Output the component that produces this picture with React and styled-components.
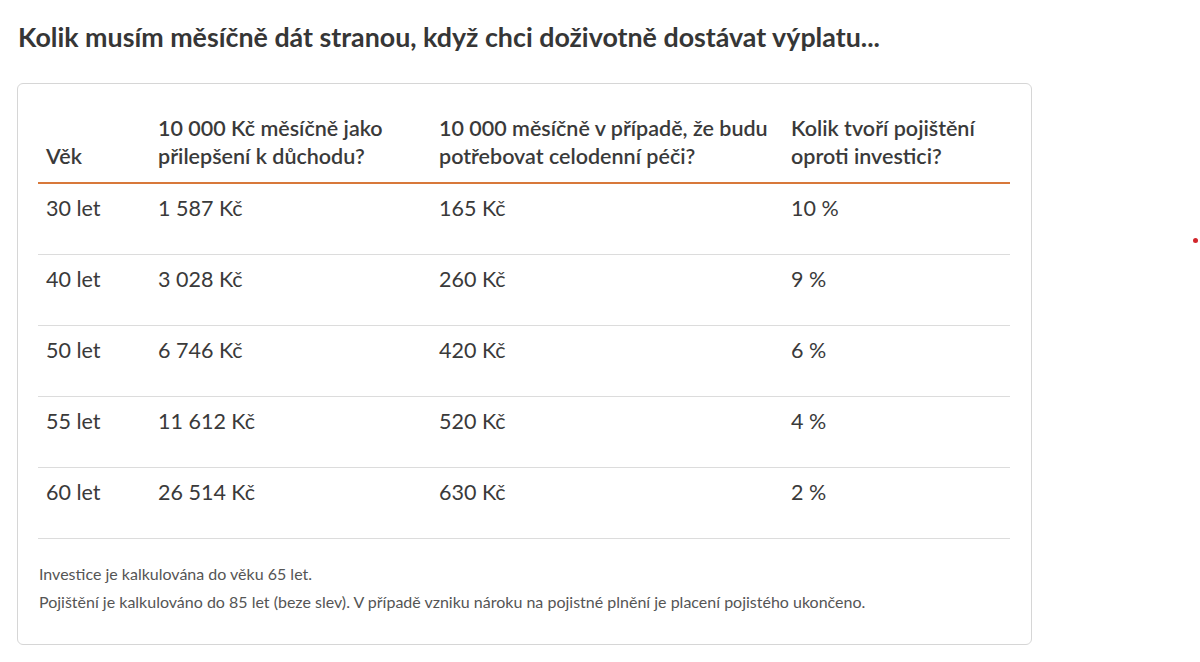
import React from "react";
import styled, { createGlobalStyle } from "styled-components";

const Global = createGlobalStyle`
  html, body { margin: 0; padding: 0; background: #fff; }
  body { font-family: "Lato", "Open Sans", sans-serif; color: #3a3a3a; }
`;

const Page = styled.div`
  position: relative;
  padding: 0 168px 0 17px;
  width: 1200px;
  box-sizing: border-box;
`;

const Title = styled.h2`
  margin: 22px 0 0 1px;
  font-size: 26.8px;
  line-height: 30px;
  font-weight: 700;
  color: #363636;
`;

const Card = styled.div`
  margin-top: 31px;
  border: 1px solid #d6d6d6;
  border-radius: 6px;
  padding: 20px 21px 32px 20px;
`;

const Table = styled.table`
  width: 100%;
  border-collapse: collapse;
  table-layout: fixed;
  font-size: 21.5px;
  line-height: 28px;
`;

const Th = styled.th`
  text-align: left;
  vertical-align: bottom;
  font-weight: 600;
  padding: 10px 8px 12px;
  border-bottom: 2px solid #d8783a;
  color: #3a3a3a;
`;

const Row = styled.tr`
  border-bottom: 1px solid #dcdcdc;
`;

const Td = styled.td`
  padding: 10px 8px 32px;
  vertical-align: top;
  color: #3a3a3a;
`;

const Note = styled.p`
  margin: ${(p) => (p.$first ? "25px" : "8px")} 0 0 1px;
  font-size: 16px;
  line-height: 20px;
  color: #555;
`;

const Dot = styled.span`
  position: absolute;
  left: 1193px;
  top: 216px;
  width: 5px;
  height: 5px;
  border-radius: 50%;
  background: #d2262c;
`;

const rows = [
  ["30 let", "1 587 Kč", "165 Kč", "10 %"],
  ["40 let", "3 028 Kč", "260 Kč", "9 %"],
  ["50 let", "6 746 Kč", "420 Kč", "6 %"],
  ["55 let", "11 612 Kč", "520 Kč", "4 %"],
  ["60 let", "26 514 Kč", "630 Kč", "2 %"],
];

export default function App() {
  return (
    <Page>
      <Global />
      <Title>Kolik musím měsíčně dát stranou, když chci doživotně dostávat výplatu...</Title>
      <Card>
        <Table>
          <colgroup>
            <col style={{ width: "112px" }} />
            <col style={{ width: "281px" }} />
            <col style={{ width: "352px" }} />
            <col />
          </colgroup>
          <thead>
            <tr>
              <Th>Věk</Th>
              <Th>10 000 Kč měsíčně jako<br />přilepšení k důchodu?</Th>
              <Th>10 000 měsíčně v případě, že budu<br />potřebovat celodenní péči?</Th>
              <Th>Kolik tvoří pojištění<br />oproti investici?</Th>
            </tr>
          </thead>
          <tbody>
            {rows.map((r) => (
              <Row key={r[0]}>
                {r.map((c, i) => (
                  <Td key={i}>{c}</Td>
                ))}
              </Row>
            ))}
          </tbody>
        </Table>
        <Note $first>Investice je kalkulována do věku 65 let.</Note>
        <Note>Pojištění je kalkulováno do 85 let (beze slev). V případě vzniku nároku na pojistné plnění je placení pojistého ukončeno.</Note>
      </Card>
      <Dot />
    </Page>
  );
}
